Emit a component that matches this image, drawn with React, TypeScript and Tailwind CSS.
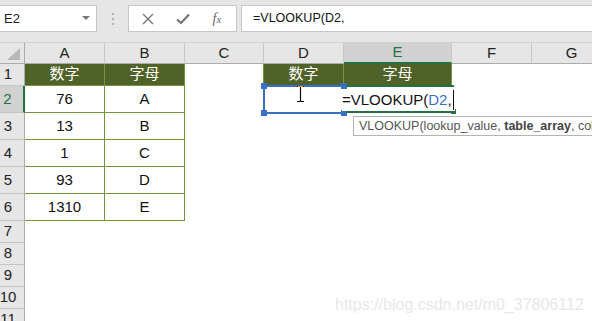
import React from 'react';

const cols = [
    { key: 'A', w: 'w-[80px]' },
    { key: 'B', w: 'w-[80px]' },
    { key: 'C', w: 'w-[79px]' },
    { key: 'D', w: 'w-[80px]' },
    { key: 'E', w: 'w-[108px]' },
    { key: 'F', w: 'w-[80px]' },
    { key: 'G', w: 'w-[80px]' },
];

// cell contents, keyed "row-col"
const data: Record<string, string> = {
    '1-A': '数字', '1-B': '字母', '1-D': '数字', '1-E': '字母',
    '2-A': '76', '2-B': 'A',
    '3-A': '13', '3-B': 'B',
    '4-A': '1', '4-B': 'C',
    '5-A': '93', '5-B': 'D',
    '6-A': '1310', '6-B': 'E',
};

const rowHeights: Record<number, string> = {
    1: 'h-[22px]', 2: 'h-[27px]', 3: 'h-[27px]', 4: 'h-[27px]', 5: 'h-[27px]', 6: 'h-[27px]',
};

const cellClass = (row: number, col: string) => {
    const inTable = (row <= 6 && (col === 'A' || col === 'B')) || (row === 1 && (col === 'D' || col === 'E'));
    const base = 'shrink-0 flex items-center justify-center';
    if (inTable) {
        const fill = row === 1 ? 'bg-[#4f6228] text-white' : 'bg-white text-[#111]';
        return `${base} ${fill} border-r border-b border-[#77933c]`;
    }
    if (row === 1 && col === 'C') return `${base} border-r border-[#77933c]`;
    return base;
};

const RowHeader = ({ n, selected }: { n: number; selected?: boolean }) => (
    <div
        className={`w-[25px] shrink-0 flex items-center justify-center pr-[8px] border-b border-[#c4c4c4] ${
            selected ? 'bg-[#d2d2d2] text-[#217346] border-r-2 border-r-[#217346]' : 'bg-[#e6e6e6] text-[#222] border-r border-r-[#ababab]'
        }`}
    >
        {n}
    </div>
);

export default function App() {
    const rows = [1, 2, 3, 4, 5, 6, 7, 8, 9, 10, 11];

    return (
        <div className="relative w-[592px] h-[321px] overflow-hidden bg-white font-['Liberation_Sans','Noto_Sans_CJK_SC',sans-serif] text-[15px]">
            {/* Formula bar */}
            <div className="h-[43px] bg-[#e6e6e6] flex pt-[5px] border-b border-[#d0d0d0]">
                <div className="w-[97px] h-[27px] bg-white border border-l-0 border-[#c6c6c6] flex items-center justify-between pl-[4px] pr-[6px] text-[13px] text-[#222]">
                    <span>E2</span>
                    <svg width="8" height="5" viewBox="0 0 8 5"><path d="M0 0 L8 0 L4 4 Z" fill="#777" /></svg>
                </div>
                <div className="w-[31px] flex flex-col items-center justify-center gap-[3px] h-[27px]">
                    <span className="w-[2px] h-[2px] bg-[#b0b0b0]" />
                    <span className="w-[2px] h-[2px] bg-[#b0b0b0]" />
                    <span className="w-[2px] h-[2px] bg-[#b0b0b0]" />
                </div>
                <div className="w-[109px] h-[27px] bg-white border border-[#c6c6c6] flex items-center">
                    <div className="w-[37px] flex justify-center">
                        <svg width="12" height="12" viewBox="0 0 12 12">
                            <path d="M1 1 L11 11 M11 1 L1 11" stroke="#777" strokeWidth="1.4" />
                        </svg>
                    </div>
                    <div className="w-[34px] flex justify-center">
                        <svg width="14" height="12" viewBox="0 0 14 12">
                            <path d="M1 6.5 L5 10 L13 1.5" stroke="#777" strokeWidth="2.3" fill="none" />
                        </svg>
                    </div>
                    <div className="flex-1 flex justify-center pr-[2px] font-['Liberation_Serif',serif] italic text-[14px] text-[#666]">
                        f<span className="text-[11px] mt-[3px]">x</span>
                    </div>
                </div>
                <div className="ml-[4px] flex-1 h-[27px] bg-white border border-r-0 border-[#c6c6c6] flex items-center pl-[11px] text-[12.5px] text-[#111]">
                    =VLOOKUP(D2,
                </div>
            </div>

            {/* Column headers */}
            <div className="flex h-[21px]">
                <div className="w-[25px] shrink-0 bg-[#e6e6e6] border-r border-b border-[#ababab] flex items-end justify-end pr-[4px] pb-[3px]">
                    <svg width="13" height="12" viewBox="0 0 13 12"><path d="M13 0 L13 12 L0 12 Z" fill="#b8b8b8" /></svg>
                </div>
                {cols.map(c => (
                    <div
                        key={c.key}
                        className={`${c.w} shrink-0 flex items-center justify-center border-r border-[#c8c8c8] ${
                            c.key === 'E'
                                ? 'bg-[#d2d2d2] text-[#217346] border-b-2 border-b-[#217346]'
                                : 'bg-[#e6e6e6] text-[#222] border-b border-b-[#ababab]'
                        }`}
                    >
                        {c.key}
                    </div>
                ))}
            </div>

            {/* Rows */}
            {rows.map(r => (
                <div key={r} className={`flex ${rowHeights[r] ?? 'h-[22px]'}`}>
                    <RowHeader n={r} selected={r === 2} />
                    {cols.map(c => (
                        <div key={c.key} className={`${c.w} ${cellClass(r, c.key)}`}>
                            {data[`${r}-${c.key}`] ?? ''}
                        </div>
                    ))}
                </div>
            ))}

            {/* D2 reference highlight */}
            <div className="absolute left-[263px] top-[85px] w-[82px] h-[29px] border-2 border-[#3a6fc8]">
                <span className="absolute -left-[4px] -top-[4px] w-[6px] h-[6px] bg-[#3a6fc8]" />
                <span className="absolute -right-[4px] -top-[4px] w-[6px] h-[6px] bg-[#3a6fc8]" />
                <span className="absolute -left-[4px] -bottom-[4px] w-[6px] h-[6px] bg-[#3a6fc8]" />
                <span className="absolute -right-[4px] -bottom-[4px] w-[6px] h-[6px] bg-[#3a6fc8]" />
            </div>

            {/* I-beam mouse cursor */}
            <svg className="absolute left-[296px] top-[86px]" width="9" height="16" viewBox="0 0 9 16">
                <path d="M1 0.5 H8 M4.5 0.5 V15.5 M1 15.5 H8" stroke="#111" strokeWidth="1.2" fill="none" />
                <path d="M2 0.5 H7" stroke="#e0a040" strokeWidth="1" />
            </svg>

            {/* E2 active cell in edit mode */}
            <div className="absolute left-[346px] top-[85px] w-[108px] h-[2px] bg-[#217346]" />
            <div className="absolute left-[346px] top-[111px] w-[108px] h-[2px] bg-[#217346]" />
            <span className="absolute left-[451px] top-[109px] w-[5px] h-[5px] bg-[#217346]" />
            <div className="absolute left-[342px] top-[89px] h-[22px] flex items-center whitespace-nowrap text-[15px] text-[#111] bg-white pr-[1px]">
                =VLOOKUP(<span className="text-[#3a6fc8]">D2</span>,
                <span className="ml-[1px] w-[1px] h-[20px] bg-[#111]" />
            </div>

            {/* Function tooltip */}
            <div className="absolute left-[353px] top-[116px] w-[260px] h-[20px] bg-white border border-[#b4b4b4] flex items-center pl-[5px] whitespace-nowrap text-[12.5px] text-[#555]">
                VLOOKUP(lookup_value,&nbsp;<b className="text-[#444]">table_array</b>, col_index_num, [range_lookup])
            </div>

            {/* Watermark */}
            <div className="absolute left-[335px] top-[293px] text-[16px] text-[#e8e8e8] whitespace-nowrap">
                https://blog.csdn.net/m0_37806112
            </div>
        </div>
    );
}
